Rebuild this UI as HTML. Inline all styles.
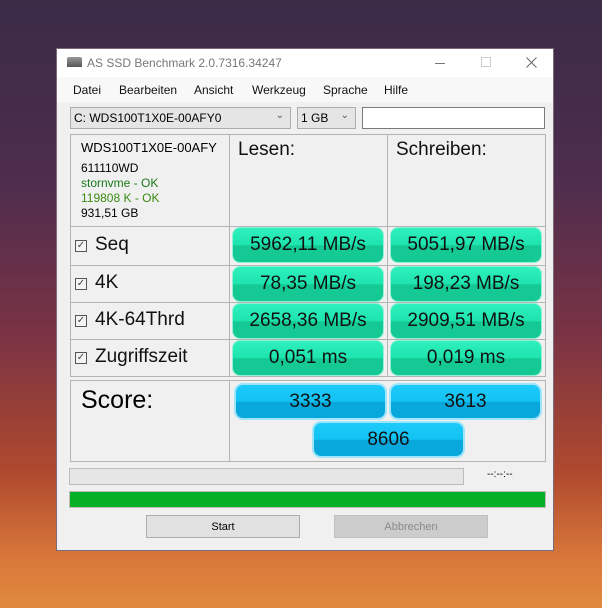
<!DOCTYPE html>
<html><head><meta charset="utf-8"><style>
*{margin:0;padding:0;box-sizing:border-box}
body{width:602px;height:608px;overflow:hidden;position:relative;font-family:"Liberation Sans",sans-serif;
background:linear-gradient(180deg,#3a2b47 0%,#4e2d4e 30%,#7a3344 55%,#b04a2e 78%,#d9783a 92%,#e08a3e 100%);}
.win{position:absolute;left:56px;top:48px;width:498px;height:503px;background:#f0f0f0;border:1px solid #7a6a7a}
.title{position:absolute;left:0;top:0;width:100%;height:28px;background:#fff;font-size:12px;color:#777}
.menu{position:absolute;left:0;top:28px;width:100%;height:25px;background:#f8f8f8;font-size:12px;color:#111}
.menu span{position:absolute;top:6px}
.a{position:absolute}
.sel{position:absolute;background:#e5e5e5;border:1px solid #adadad;font-size:12px;padding:3px 0 0 3px;height:22px}
.cell{position:absolute;border:1px solid #b4b4b4;background:#f0f0f0}
.g{position:absolute;width:150px;height:34px;border-radius:7px;background:linear-gradient(180deg,#2ef0bc 0%,#1fe4b0 50%,#15c994 52%,#15c994 100%);box-shadow:0 0 0 1px #8ff0d4;font-size:19px;text-align:center;line-height:34px;color:#111}
.b{position:absolute;width:149px;height:33px;border-radius:7px;background:linear-gradient(180deg,#1ccbfa 0%,#13c2f2 50%,#08a8dd 52%,#08a8dd 100%);box-shadow:0 0 0 2px #9ee4fb;font-size:19px;text-align:center;line-height:33px;color:#111}
.lbl{position:absolute;font-size:19px;color:#111}
.cb{display:inline-block;width:12px;height:12px;border:1px solid #555;font-size:10px;line-height:10px;text-align:center;vertical-align:2px;margin-right:8px;background:#f4f4f4;color:#444}
</style></head><body>
<div class="win">
 <div class="title">
  <div class="a" style="left:10px;top:8px;width:15px;height:10px;background:linear-gradient(#999,#555);border-radius:2px 2px 0 0"></div>
  <span class="a" style="left:30px;top:7px">AS SSD Benchmark 2.0.7316.34247</span>
  <div class="a" style="left:378px;top:14px;width:10px;height:1px;background:#777"></div>
  <div class="a" style="left:424px;top:8px;width:10px;height:10px;border:1px solid #ccc"></div>
  <svg class="a" style="left:469px;top:8px" width="11" height="11"><path d="M0.5 0.5L10.5 10.5M10.5 0.5L0.5 10.5" stroke="#666" stroke-width="1"/></svg>
 </div>
 <div class="menu">
  <span style="left:16px">Datei</span><span style="left:62px">Bearbeiten</span><span style="left:137px">Ansicht</span><span style="left:195px">Werkzeug</span><span style="left:266px">Sprache</span><span style="left:327px">Hilfe</span>
 </div>
 <div class="sel" style="left:13px;top:58px;width:221px">C: WDS100T1X0E-00AFY0<span style="position:absolute;right:6px;top:2px;font-size:10px;color:#555">&#8964;</span></div>
 <div class="sel" style="left:240px;top:58px;width:59px">1 GB<span style="position:absolute;right:6px;top:2px;font-size:10px;color:#555">&#8964;</span></div>
 <div class="a" style="left:305px;top:58px;width:183px;height:22px;background:#fff;border:1px solid #7a7a7a"></div>

 <div class="cell" style="left:13px;top:85px;width:160px;height:93px">
  <div style="position:absolute;left:10px;top:5px;font-size:13px">WDS100T1X0E-00AFY</div>
  <div style="position:absolute;left:10px;top:26px;font-size:12px;line-height:15px">611110WD<br><span style="color:#1a7a1a">stornvme - OK</span><br><span style="color:#3a8a12">119808 K - OK</span><br>931,51 GB</div>
 </div>
 <div class="cell" style="left:172px;top:85px;width:159px;height:93px"><span class="lbl" style="left:8px;top:4px">Lesen:</span></div>
 <div class="cell" style="left:330px;top:85px;width:159px;height:93px"><span class="lbl" style="left:8px;top:4px">Schreiben:</span></div>

 <div class="cell" style="left:13px;top:177px;width:160px;height:40px"><span class="lbl" style="left:4px;top:7px"><span class="cb">✓</span>Seq</span></div>
 <div class="cell" style="left:13px;top:216px;width:160px;height:38px"><span class="lbl" style="left:4px;top:6px"><span class="cb">✓</span>4K</span></div>
 <div class="cell" style="left:13px;top:253px;width:160px;height:38px"><span class="lbl" style="left:4px;top:6px"><span class="cb">✓</span>4K-64Thrd</span></div>
 <div class="cell" style="left:13px;top:290px;width:160px;height:38px"><span class="lbl" style="left:4px;top:6px"><span class="cb">✓</span>Zugriffszeit</span></div>
 <div class="cell" style="left:172px;top:177px;width:159px;height:40px"></div>
 <div class="cell" style="left:172px;top:216px;width:159px;height:38px"></div>
 <div class="cell" style="left:172px;top:253px;width:159px;height:38px"></div>
 <div class="cell" style="left:172px;top:290px;width:159px;height:38px"></div>
 <div class="cell" style="left:330px;top:177px;width:159px;height:40px"></div>
 <div class="cell" style="left:330px;top:216px;width:159px;height:38px"></div>
 <div class="cell" style="left:330px;top:253px;width:159px;height:38px"></div>
 <div class="cell" style="left:330px;top:290px;width:159px;height:38px"></div>

 <div class="g" style="left:176px;top:179px">5962,11 MB/s</div>
 <div class="g" style="left:334px;top:179px">5051,97 MB/s</div>
 <div class="g" style="left:176px;top:218px">78,35 MB/s</div>
 <div class="g" style="left:334px;top:218px">198,23 MB/s</div>
 <div class="g" style="left:176px;top:255px">2658,36 MB/s</div>
 <div class="g" style="left:334px;top:255px">2909,51 MB/s</div>
 <div class="g" style="left:176px;top:292px">0,051 ms</div>
 <div class="g" style="left:334px;top:292px">0,019 ms</div>

 <div class="cell" style="left:13px;top:331px;width:160px;height:82px"><span style="position:absolute;left:10px;top:5px;font-size:25px">Score:</span></div>
 <div class="cell" style="left:172px;top:331px;width:317px;height:82px"></div>
 <div class="b" style="left:179px;top:336px">3333</div>
 <div class="b" style="left:334px;top:336px">3613</div>
 <div class="b" style="left:257px;top:374px">8606</div>

 <div class="a" style="left:12px;top:419px;width:395px;height:17px;background:#e6e6e6;border:1px solid #bcbcbc"></div>
 <span class="a" style="left:430px;top:420px;font-size:10px">--:--:--</span>
 <div class="a" style="left:12px;top:442px;width:477px;height:17px;background:#06b026;border:1px solid #bcbcbc"></div>
 <div class="a" style="left:89px;top:466px;width:154px;height:23px;background:#e1e1e1;border:1px solid #adadad;font-size:11px;text-align:center;line-height:22px">Start</div>
 <div class="a" style="left:277px;top:466px;width:154px;height:23px;background:#cccccc;border:1px solid #bfbfbf;font-size:11px;text-align:center;line-height:22px;color:#8a8a8a">Abbrechen</div>
</div>
</body></html>
